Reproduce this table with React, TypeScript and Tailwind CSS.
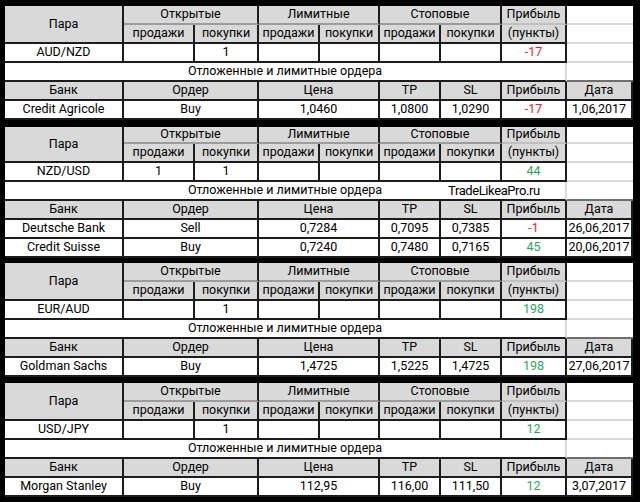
import React from 'react'

type Row = { bank: string; order: string; price: string; tp: string; sl: string; profit: string; up: boolean; date: string }

type Block = {
    pair: string
    openSell: string
    openBuy: string
    profit: string
    up: boolean
    rows: Row[]
    mark?: boolean
}

const blocks: Block[] = [
    {
        pair: 'AUD/NZD', openSell: '', openBuy: '1', profit: '-17', up: false,
        rows: [{ bank: 'Credit Agricole', order: 'Buy', price: '1,0460', tp: '1,0800', sl: '1,0290', profit: '-17', up: false, date: '1,06,2017' }],
    },
    {
        pair: 'NZD/USD', openSell: '1', openBuy: '1', profit: '44', up: true, mark: true,
        rows: [
            { bank: 'Deutsche Bank', order: 'Sell', price: '0,7284', tp: '0,7095', sl: '0,7385', profit: '-1', up: false, date: '26,06,2017' },
            { bank: 'Credit Suisse', order: 'Buy', price: '0,7240', tp: '0,7480', sl: '0,7165', profit: '45', up: true, date: '20,06,2017' },
        ],
    },
    {
        pair: 'EUR/AUD', openSell: '', openBuy: '1', profit: '198', up: true,
        rows: [{ bank: 'Goldman Sachs', order: 'Buy', price: '1,4725', tp: '1,5225', sl: '1,4725', profit: '198', up: true, date: '27,06,2017' }],
    },
    {
        pair: 'USD/JPY', openSell: '', openBuy: '1', profit: '12', up: true,
        rows: [{ bank: 'Morgan Stanley', order: 'Buy', price: '112,95', tp: '116,00', sl: '111,50', profit: '12', up: true, date: '3,07,2017' }],
    },
]

const base = 'flex items-center justify-center border-r-2 border-b-2 border-[#1c1c1c] whitespace-nowrap leading-none'
const head = base + ' bg-[#d9d9d9]'
const groupHead = head + ' col-span-2 border-b-[#9c9c9c]'
const blank = 'border-b-2 border-[#dadada] bg-white'
const cell = base + ' bg-white'

function Cell({ className = '', children }: { className?: string; children?: React.ReactNode }) {
    return <div className={className}>{children}</div>
}

function Profit({ value, up }: { value: string; up: boolean }) {
    return <span className={up ? 'text-[#1fa760]' : 'text-[#f0202a]'}>{value}</span>
}

function Section({ b }: { b: Block }) {
    const rowsCls = b.mark
        ? 'grid grid-cols-[119px_71px_64px_61px_60px_61px_61px_65px_66px] grid-rows-[17px_19px_19px_19px_19px_19px_19px]'
        : 'grid grid-cols-[119px_71px_64px_61px_60px_61px_61px_65px_66px] grid-rows-[19px_19px_19px_19px_19px_19px]'

    return (
        <div className={rowsCls}>
            {/* header */}
            <Cell className={head + ' row-span-2'}>Пара</Cell>
            <Cell className={groupHead}>Открытые</Cell>
            <Cell className={groupHead}>Лимитные</Cell>
            <Cell className={groupHead}>Стоповые</Cell>
            <Cell className={head + ' border-b-[#c0c0c0]'}>Прибыль</Cell>
            <Cell className={blank} />

            <Cell className={head}>продажи</Cell>
            <Cell className={head}>покупки</Cell>
            <Cell className={head}>продажи</Cell>
            <Cell className={head}>покупки</Cell>
            <Cell className={head}>продажи</Cell>
            <Cell className={head}>покупки</Cell>
            <Cell className={head}>(пункты)</Cell>
            <Cell className={blank} />

            {/* open positions */}
            <Cell className={cell}>{b.pair}</Cell>
            <Cell className={cell}>{b.openSell}</Cell>
            <Cell className={cell}>{b.openBuy}</Cell>
            <Cell className={cell} />
            <Cell className={cell} />
            <Cell className={cell} />
            <Cell className={cell} />
            <Cell className={cell}><Profit value={b.profit} up={b.up} /></Cell>
            <Cell className={blank} />

            <div className="relative col-span-8 flex items-center justify-center border-r-2 border-r-[#dadada] border-b-2 border-b-[#1c1c1c] bg-white leading-none whitespace-nowrap">
                Отложенные и лимитные ордера
                {b.mark && (
                    <span className="absolute inset-y-0 left-[443px] flex items-center text-[13px] tracking-[-0.4px]">
                        TradeLikeaPro.ru
                    </span>
                )}
            </div>
            <Cell className="border-b-2 border-[#6e6e6e] bg-white" />

            {/* pending orders */}
            <Cell className={head}>Банк</Cell>
            <Cell className={head + ' col-span-2'}>Ордер</Cell>
            <Cell className={head + ' col-span-2'}>Цена</Cell>
            <Cell className={head}>TP</Cell>
            <Cell className={head}>SL</Cell>
            <Cell className={head}>Прибыль</Cell>
            <Cell className={head}>Дата</Cell>

            {b.rows.map((r) => (
                <React.Fragment key={r.bank}>
                    <Cell className={cell}>{r.bank}</Cell>
                    <Cell className={cell + ' col-span-2'}>{r.order}</Cell>
                    <Cell className={cell + ' col-span-2'}>{r.price}</Cell>
                    <Cell className={cell}>{r.tp}</Cell>
                    <Cell className={cell}>{r.sl}</Cell>
                    <Cell className={cell}><Profit value={r.profit} up={r.up} /></Cell>
                    <Cell className={cell}>{r.date}</Cell>
                </React.Fragment>
            ))}
        </div>
    )
}

export default function App() {
    return (
        <div className="w-[640px] h-[502px] bg-black pt-[6px] pl-[5px] flex flex-col text-[12.5px] text-black font-['Roboto',sans-serif]">
            <Section b={blocks[0]} />
            <div className="h-[7px]" />
            <Section b={blocks[1]} />
            <div className="h-[5px]" />
            <Section b={blocks[2]} />
            <div className="h-[6px]" />
            <Section b={blocks[3]} />
        </div>
    )
}
